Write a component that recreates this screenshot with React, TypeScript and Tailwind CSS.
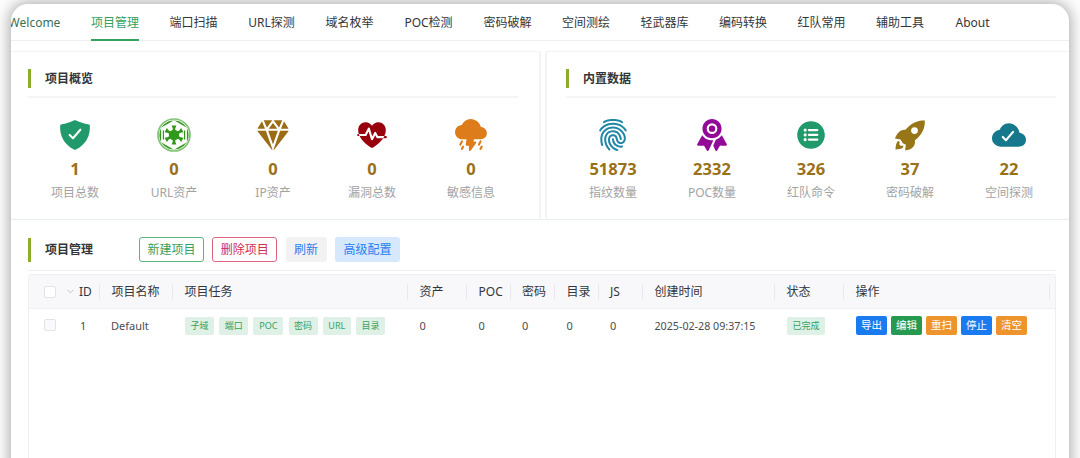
import { useState } from "react";
import type { ComponentType } from "react";
import {
  IoChevronDown,
  IoCloudDone,
  IoDiamond,
  IoFingerPrint,
  IoFitness,
  IoListCircle,
  IoRibbon,
  IoShieldCheckmark,
  IoThunderstorm,
} from "react-icons/io5";

type Stat = {
  icon: ComponentType<{ className?: string }>;
  color: string;
  value: number;
  label: string;
};

// Six-spoked cog inside a hexagon and a ring
const CogEmblem = ({ className }: { className?: string }) => (
  <svg viewBox="-17 -17 34 34" className={className}>
    <circle r="16" fill="none" stroke="currentColor" strokeOpacity="0.6" strokeWidth="1.7" />
    <circle r="14.6" fill="currentColor" />
    <polygon
      points="0,-14 12.2,-7 12.2,7 0,14 -12.2,7 -12.2,-7"
      fill="white"
      stroke="white"
      strokeWidth="1.4"
      strokeLinejoin="round"
    />
    {[0, 60, 120, 180, 240, 300].map((angle) => (
      <path
        key={angle}
        transform={`rotate(${angle})`}
        d="M-1.3 0L-1.3 -6.8L-2.4 -9.6H2.4L1.3 -6.8L1.3 0Z"
        fill="currentColor"
      />
    ))}
    <path d="M-10.6 -4.5V4.5M10.6 -4.5V4.5" stroke="currentColor" strokeWidth="1.2" />
    <circle r="5.2" fill="currentColor" />
  </svg>
);

const Rocket = ({ className }: { className?: string }) => (
  <svg viewBox="-1.5 -2 34 34" fill="currentColor" fillRule="evenodd" className={className}>
    <path d="M30.3 0.5C26.5 0.4 23 1 20 2.6C16.3 4.4 13.4 7 11 9.8C8.5 9.8 6.4 10.3 4.8 11.8C2.6 13.8 1.2 16 0.5 18.6L6 19.4L8.3 23.2L11.4 24.8L10.6 30.3C13.5 30.4 16.4 29.2 18.6 27C20.4 25.2 20.7 22.8 20.4 20.3C24 17.6 26.5 14.8 28 11.6C29.7 8.2 30.6 4.3 30.3 0.5ZM20 7.2A3.4 3.4 0 1 0 20 14A3.4 3.4 0 1 0 20 7.2Z" />
    <path d="M3.6 20.8C1.7 23 1 26 1 29.4C4 29.4 6.4 29.2 8.6 27.6L8.9 25.4L6.3 25.9L4.8 24.3L5.2 22Z" />
  </svg>
);

const tabs = [
  { name: "Welcome", width: "w-[52px]" },
  { name: "项目管理", width: "w-[48px]" },
  { name: "端口扫描", width: "w-[48px]" },
  { name: "URL探测", width: "w-[47px]" },
  { name: "域名枚举", width: "w-[48px]" },
  { name: "POC检测", width: "w-[49px]" },
  { name: "密码破解", width: "w-[48px]" },
  { name: "空间测绘", width: "w-[48px]" },
  { name: "轻武器库", width: "w-[48px]" },
  { name: "编码转换", width: "w-[48px]" },
  { name: "红队常用", width: "w-[48px]" },
  { name: "辅助工具", width: "w-[48px]" },
  { name: "About", width: "w-[36px]" },
];

const overview: Stat[] = [
  { icon: IoShieldCheckmark, color: "text-[#20996b]", value: 1, label: "项目总数" },
  { icon: CogEmblem, color: "text-[#30981a]", value: 0, label: "URL资产" },
  { icon: IoDiamond, color: "text-[#9a6c14]", value: 0, label: "IP资产" },
  { icon: IoFitness, color: "text-[#98000d]", value: 0, label: "漏洞总数" },
  { icon: IoThunderstorm, color: "text-[#dd7c1a]", value: 0, label: "敏感信息" },
];

const builtin: Stat[] = [
  { icon: IoFingerPrint, color: "text-[#2187a6]", value: 51873, label: "指纹数量" },
  { icon: IoRibbon, color: "text-[#930a98]", value: 2332, label: "POC数量" },
  { icon: IoListCircle, color: "text-[#20996b]", value: 326, label: "红队命令" },
  { icon: Rocket, color: "text-[#967616]", value: 37, label: "密码破解" },
  { icon: IoCloudDone, color: "text-[#16788c]", value: 22, label: "空间探测" },
];

const columns = ["项目名称", "项目任务", "资产", "POC", "密码", "目录", "JS", "创建时间", "状态", "操作"];

const tasks = [
  { name: "子域", width: "w-[29px]" },
  { name: "端口", width: "w-[29px]" },
  { name: "POC", width: "w-[30px]" },
  { name: "密码", width: "w-[29px]" },
  { name: "URL", width: "w-[28px]" },
  { name: "目录", width: "w-[29px]" },
];

const actions = [
  { name: "导出", color: "bg-[#1a7af0]" },
  { name: "编辑", color: "bg-[#289a50]" },
  { name: "重扫", color: "bg-[#ee942c]" },
  { name: "停止", color: "bg-[#1a7af0]" },
  { name: "清空", color: "bg-[#ee942c]" },
];

const gridCols =
  "grid grid-cols-[71px_73px_235px_59px_43.5px_44.5px_43.5px_44.5px_132px_69px_1fr]";

const Title = ({ children }: { children: string }) => (
  <h2 className="border-l-[3px] border-[#8aae2c] pl-[14px] text-[12px] font-semibold leading-[19px] text-[#333639]">
    {children}
  </h2>
);

const StatCard = ({ title, stats }: { title: string; stats: Stat[] }) => (
  <>
    <div className="border-b-2 border-[#f5f5f6] pb-[8px]">
      <Title>{title}</Title>
    </div>
    <div className="-ml-[2.5px] mt-[20px] flex w-[495px]">
      {stats.map(({ icon: Icon, color, value, label }) => (
        <div key={label} className="flex w-[99px] flex-col items-center">
          <Icon className={`size-[34px] ${color}`} />
          <span className="mt-[6px] text-[16.5px] font-bold leading-[22px] text-[#9a7018]">{value}</span>
          <span className="mt-[3px] text-[12px] leading-[20px] text-[#a3a3a3]">{label}</span>
        </div>
      ))}
    </div>
  </>
);

const Tag = ({ children, width }: { children: string; width: string }) => (
  <span className={`flex h-[18px] items-center justify-center rounded-[2px] bg-[#dff1e6] text-[9px] text-[#35a060] ${width}`}>
    {children}
  </span>
);

const Checkbox = ({ checked, onChange, className }: { checked: boolean; onChange: () => void; className: string }) => (
  <button
    role="checkbox"
    aria-checked={checked}
    onClick={onChange}
    className={`size-[12px] shrink-0 rounded-[2px] border ${checked ? "border-[#289a50] bg-[#289a50]" : className}`}
  />
);

export default function App() {
  const [active, setActive] = useState("项目管理");
  const [selected, setSelected] = useState(false);

  return (
    <div className="h-[458px] overflow-hidden bg-[#fdfdfd] pl-[11px] pr-[11px] pt-[4px] font-['Noto_Sans','Noto_Sans_CJK_SC',sans-serif]">
      <div className="h-[480px] overflow-hidden rounded-[17px] bg-white shadow-[0_0_14px_2px_rgba(0,0,0,0.32)]">
        <nav className="-mr-10 flex h-[37px] gap-[30.5px] border-b border-[#efeff2] text-[12px] text-[#333639]">
          {tabs.map((tab, i) => (
            <button
              key={tab.name}
              onClick={() => setActive(tab.name)}
              className={`h-[37px] shrink-0 whitespace-nowrap border-b-2 pt-[2px] ${tab.width} ${
                i === 0 ? "-ml-[2.5px] text-[#3b6e55]" : ""
              } ${active === tab.name ? "border-[#35a060] text-[#35a060]" : "border-transparent"}`}
            >
              <span className="flex justify-center">{tab.name}</span>
            </button>
          ))}
        </nav>

        <div className="mt-[10px] flex gap-[4px] border-b border-[#e9ecf0]">
          <section className="h-[168px] w-[530px] shrink-0 rounded-r-[3px] border-r-2 border-t border-[#f3f3f6] pl-[17px] pr-[20px] pt-[17px]">
            <StatCard title="项目概览" stats={overview} />
          </section>
          <section className="h-[168px] w-[540px] shrink-0 rounded-l-[3px] border-l-2 border-t border-[#f3f3f6] pl-[19px] pt-[17px]">
            <div className="w-[490px]">
              <StatCard title="内置数据" stats={builtin} />
            </div>
          </section>
        </div>

        <section className="ml-[17px] mr-[13px] pt-[17px]">
          <div className="flex items-center border-b border-[#efeff2] pb-[8px] text-[12px]">
            <div className="w-[111px]">
              <h2 className="border-l-[3px] border-[#8aae2c] pl-[14px] font-semibold leading-[24px] text-[#333639]">
                项目管理
              </h2>
            </div>
            <div className="flex gap-[8.3px]">
              <button className="h-[25px] w-[65px] rounded-[3px] border border-[#5bb37e] text-[#35a060]">新建项目</button>
              <button className="h-[25px] w-[65px] rounded-[3px] border border-[#dc6680] text-[#d03050]">删除项目</button>
              <button className="h-[25px] w-[41px] rounded-[3px] bg-[#f2f2f3] text-[#2a80f0]">刷新</button>
              <button className="h-[25px] w-[65px] rounded-[3px] bg-[#d5e8fc] text-[#2a80f0]">高级配置</button>
            </div>
          </div>

          <div className="mt-[3px] h-[220px] rounded-[3px] border border-[#efeff2]">
            <div className={`${gridCols} h-[34px] items-center border-b border-[#efeff2] bg-[#f8f8fb] text-[12px] text-[#333639]`}>
              <div className="flex h-[16px] items-center border-r border-[#e8e8ee] pl-[15px]">
                <Checkbox checked={selected} onChange={() => setSelected(!selected)} className="border-[#e2e2e8] bg-white" />
                <IoChevronDown className="ml-[10px] mr-[4px] size-[9px] shrink-0 text-[#b8b8c0]" />
                ID
              </div>
              {columns.map((name) => (
                <div
                  key={name}
                  className="flex h-[16px] items-center whitespace-nowrap border-r border-[#e8e8ee] pl-[11.5px] last:mr-[5px]"
                >
                  {name}
                </div>
              ))}
            </div>

            <div className={`${gridCols} h-[34px] items-center text-[11px] text-[#4a4d50]`}>
              <div className="flex items-center pb-[2px] pl-[15px]">
                <Checkbox checked={selected} onChange={() => setSelected(!selected)} className="border-[#e2e2e8] bg-[#fafafc]" />
                <span className="ml-[24px] pt-[2px]">1</span>
              </div>
              <div className="pl-[11px] pt-[1px]">Default</div>
              <div className="flex gap-[5.2px] pl-[12px]">
                {tasks.map((task) => (
                  <Tag key={task.name} width={task.width}>
                    {task.name}
                  </Tag>
                ))}
              </div>
              {["资产", "POC", "密码", "目录", "JS"].map((name) => (
                <div key={name} className="pl-[11.5px] pt-[1px]">
                  0
                </div>
              ))}
              <div className="whitespace-nowrap pl-[11.5px] pt-[1px] text-[10.7px]">2025-02-28 09:37:15</div>
              <div className="pl-[12px]">
                <Tag width="w-[38px]">已完成</Tag>
              </div>
              <div className="flex gap-[4px] pb-[1px] pl-[12px]">
                {actions.map((action) => (
                  <button
                    key={action.name}
                    className={`h-[19px] w-[31px] rounded-[2px] text-[10.5px] leading-[19px] text-white ${action.color}`}
                  >
                    {action.name}
                  </button>
                ))}
              </div>
            </div>
          </div>
        </section>
      </div>
    </div>
  );
}
